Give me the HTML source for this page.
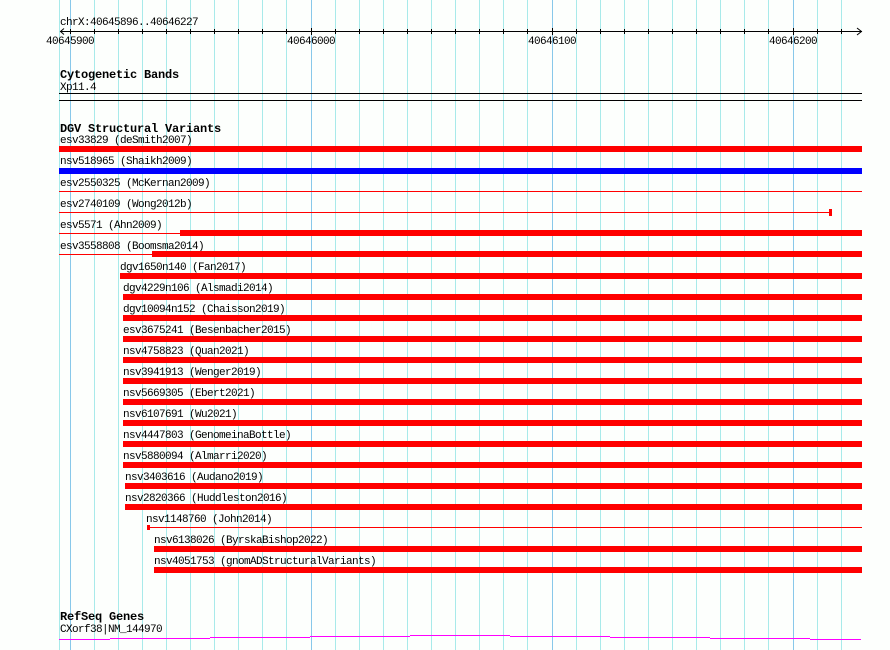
<!DOCTYPE html>
<html><head><meta charset="utf-8"><style>
html,body{margin:0;padding:0;background:#fff}
svg{display:block}
text{font-family:"Liberation Mono",monospace;font-size:11px;letter-spacing:-0.6px;fill:#000}
.b{font-weight:bold;font-size:12px;letter-spacing:-0.2px}
</style></head><body>
<svg width="890" height="650" viewBox="0 0 890 650" xmlns="http://www.w3.org/2000/svg">
<rect width="890" height="650" fill="#fdfffd"/>
<g stroke="#a8eaea" stroke-width="1">
<line x1="59.5" y1="0" x2="59.5" y2="650"/>
<line x1="94.5" y1="0" x2="94.5" y2="650"/><line x1="118.5" y1="0" x2="118.5" y2="650"/><line x1="142.5" y1="0" x2="142.5" y2="650"/><line x1="166.5" y1="0" x2="166.5" y2="650"/><line x1="190.5" y1="0" x2="190.5" y2="650"/><line x1="214.5" y1="0" x2="214.5" y2="650"/><line x1="238.5" y1="0" x2="238.5" y2="650"/><line x1="262.5" y1="0" x2="262.5" y2="650"/><line x1="286.5" y1="0" x2="286.5" y2="650"/>
<line x1="335.5" y1="0" x2="335.5" y2="650"/><line x1="359.5" y1="0" x2="359.5" y2="650"/><line x1="383.5" y1="0" x2="383.5" y2="650"/><line x1="407.5" y1="0" x2="407.5" y2="650"/><line x1="431.5" y1="0" x2="431.5" y2="650"/><line x1="455.5" y1="0" x2="455.5" y2="650"/><line x1="479.5" y1="0" x2="479.5" y2="650"/><line x1="503.5" y1="0" x2="503.5" y2="650"/><line x1="527.5" y1="0" x2="527.5" y2="650"/>
<line x1="576.5" y1="0" x2="576.5" y2="650"/><line x1="600.5" y1="0" x2="600.5" y2="650"/><line x1="624.5" y1="0" x2="624.5" y2="650"/><line x1="648.5" y1="0" x2="648.5" y2="650"/><line x1="672.5" y1="0" x2="672.5" y2="650"/><line x1="696.5" y1="0" x2="696.5" y2="650"/><line x1="720.5" y1="0" x2="720.5" y2="650"/><line x1="744.5" y1="0" x2="744.5" y2="650"/><line x1="768.5" y1="0" x2="768.5" y2="650"/>
<line x1="817.5" y1="0" x2="817.5" y2="650"/><line x1="841.5" y1="0" x2="841.5" y2="650"/>
</g>
<g stroke="#88c8ea" stroke-width="1">
<line x1="70.5" y1="0" x2="70.5" y2="650"/><line x1="311.5" y1="0" x2="311.5" y2="650"/><line x1="552.5" y1="0" x2="552.5" y2="650"/><line x1="793.5" y1="0" x2="793.5" y2="650"/>
</g>
<text x="60" y="25" textLength="138" lengthAdjust="spacingAndGlyphs">chrX:40645896..40646227</text>
<g stroke="#000" stroke-width="1" fill="none">
<line x1="60" y1="31.5" x2="862" y2="31.5"/>
<path d="M64 28.5 L60.5 31.5 L64 34.5"/>
<path d="M857 28 L861.5 31.5 L857 35"/>
<path d="M70.5 29v5M94.5 29v5M118.5 29v5M142.5 29v5M166.5 29v5M190.5 29v5M214.5 29v5M238.5 29v5M262.5 29v5M286.5 29v5M311.5 28v7M335.5 29v5M359.5 29v5M383.5 29v5M407.5 29v5M431.5 29v5M455.5 29v5M479.5 29v5M503.5 29v5M527.5 29v5M552.5 28v7M576.5 29v5M600.5 29v5M624.5 29v5M648.5 29v5M672.5 29v5M696.5 29v5M720.5 29v5M744.5 29v5M768.5 29v5M793.5 28v7M817.5 29v5M841.5 29v5"/>
</g>
<text x="46" y="44" textLength="48" lengthAdjust="spacingAndGlyphs">40645900</text>
<text x="287" y="44" textLength="48" lengthAdjust="spacingAndGlyphs">40646000</text>
<text x="528" y="44" textLength="48" lengthAdjust="spacingAndGlyphs">40646100</text>
<text x="769" y="44" textLength="48" lengthAdjust="spacingAndGlyphs">40646200</text>
<text class="b" x="60" y="78" textLength="119" lengthAdjust="spacingAndGlyphs">Cytogenetic Bands</text>
<text x="60" y="90">Xp11.4</text>
<rect x="59" y="93" width="803" height="1" fill="#000"/>
<rect x="59" y="100" width="803" height="1" fill="#000"/>
<text class="b" x="60" y="132" textLength="161" lengthAdjust="spacingAndGlyphs">DGV Structural Variants</text>
<g>
<text x="60" y="143">esv33829 (deSmith2007)</text><rect x="59" y="146" width="803" height="6" fill="#f00"/>
<text x="60" y="164">nsv518965 (Shaikh2009)</text><rect x="59" y="168" width="803" height="6" fill="#00f"/>
<text x="60" y="186">esv2550325 (McKernan2009)</text><rect x="59" y="191" width="803" height="1" fill="#f00"/>
<text x="60" y="207">esv2740109 (Wong2012b)</text><rect x="59" y="212" width="771" height="1" fill="#f00"/><rect x="829" y="209" width="3" height="7" fill="#f00"/>
<text x="60" y="228">esv5571 (Ahn2009)</text><rect x="59" y="233" width="121" height="1" fill="#f00"/><rect x="180" y="230" width="682" height="6" fill="#f00"/>
<text x="60" y="249">esv3558808 (Boomsma2014)</text><rect x="59" y="254" width="93" height="1" fill="#f00"/><rect x="152" y="251" width="710" height="6" fill="#f00"/>
<text x="120" y="270">dgv1650n140 (Fan2017)</text><rect x="120" y="273" width="742" height="6" fill="#f00"/>
<text x="123" y="291">dgv4229n106 (Alsmadi2014)</text><rect x="123" y="294" width="739" height="6" fill="#f00"/>
<text x="123" y="312">dgv10094n152 (Chaisson2019)</text><rect x="123" y="315" width="739" height="6" fill="#f00"/>
<text x="123" y="333">esv3675241 (Besenbacher2015)</text><rect x="123" y="336" width="739" height="6" fill="#f00"/>
<text x="123" y="354">nsv4758823 (Quan2021)</text><rect x="123" y="357" width="739" height="6" fill="#f00"/>
<text x="123" y="375">nsv3941913 (Wenger2019)</text><rect x="123" y="378" width="739" height="6" fill="#f00"/>
<text x="123" y="396">nsv5669305 (Ebert2021)</text><rect x="123" y="399" width="739" height="6" fill="#f00"/>
<text x="123" y="417">nsv6107691 (Wu2021)</text><rect x="123" y="420" width="739" height="6" fill="#f00"/>
<text x="123" y="438">nsv4447803 (GenomeinaBottle)</text><rect x="123" y="441" width="739" height="6" fill="#f00"/>
<text x="123" y="459">nsv5880094 (Almarri2020)</text><rect x="123" y="462" width="739" height="6" fill="#f00"/>
<text x="125" y="480">nsv3403616 (Audano2019)</text><rect x="125" y="483" width="737" height="6" fill="#f00"/>
<text x="125" y="501">nsv2820366 (Huddleston2016)</text><rect x="125" y="504" width="737" height="6" fill="#f00"/>
<text x="146" y="522">nsv1148760 (John2014)</text><rect x="147" y="527" width="715" height="1" fill="#f00"/><rect x="147" y="525" width="3" height="5" fill="#f00"/>
<text x="154" y="543">nsv6138026 (ByrskaBishop2022)</text><rect x="154" y="546" width="708" height="6" fill="#f00"/>
<text x="154" y="564">nsv4051753 (gnomADStructuralVariants)</text><rect x="154" y="567" width="708" height="6" fill="#f00"/>
</g>
<text class="b" x="60" y="620" textLength="84" lengthAdjust="spacingAndGlyphs">RefSeq Genes</text>
<text x="60" y="632">CXorf38|NM_144970</text>
<g fill="#f0f">
<rect x="59" y="639" width="51" height="1"/>
<rect x="110" y="638" width="100" height="1"/>
<rect x="210" y="637" width="100" height="1"/>
<rect x="310" y="636" width="100" height="1"/>
<rect x="410" y="635" width="100" height="1"/>
<rect x="510" y="636" width="100" height="1"/>
<rect x="610" y="637" width="100" height="1"/>
<rect x="710" y="638" width="100" height="1"/>
<rect x="810" y="639" width="51" height="1"/>
</g>
</svg>
</body></html>
